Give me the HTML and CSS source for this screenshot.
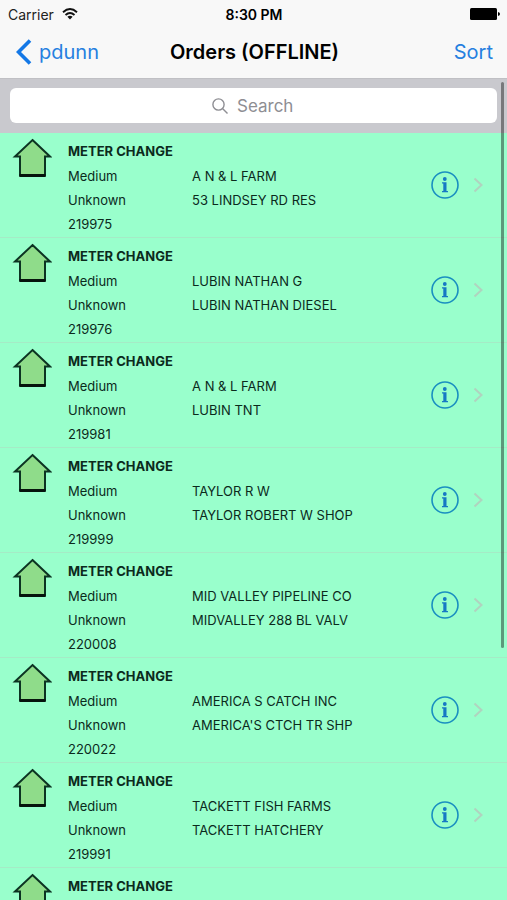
FILE: index.html
```html
<!DOCTYPE html>
<html lang="en">
<head>
<meta charset="utf-8">
<meta name="viewport" content="width=device-width, initial-scale=1">
<title>Orders (OFFLINE)</title>
<link rel="stylesheet" href="styles.css">
</head>
<body>
<svg class="sprites" aria-hidden="true">
  <symbol id="house" viewBox="0 0 40 40">
    <path d="M20.500 2 38 18.500H33V37.500H8V18.500H3Z" fill="#8fdc8a" stroke="#0c3322" stroke-width="2"/>
    <path d="M7.500 37.500H33.500" stroke="#06130c" stroke-width="3"/>
  </symbol>
  <symbol id="info" viewBox="0 0 28 28">
    <circle cx="14" cy="14" r="13" fill="none" stroke="#1a8fc0" stroke-width="1.600"/>
    <circle cx="13.800" cy="8" r="1.900" fill="#1678c4"/>
    <path d="M11 11.300H15.500V20H17V21.300H11V20H12.300V12.600H11Z" fill="#1678c4"/>
  </symbol>
  <symbol id="chevron" viewBox="0 0 10 16">
    <path d="M1.500 1.500 8.500 8 1.500 14.500" fill="none" stroke="#b0d3bf" stroke-width="2"/>
  </symbol>
</svg>
<div class="app">
  <header class="top">
    <div class="status">
      <span class="carrier">Carrier
        <svg class="wifi" viewBox="0 0 16 12" aria-hidden="true">
          <g fill="none" stroke="#111" stroke-width="1.900">
            <path d="M1 4.200Q8-2 15 4.200"/>
            <path d="M3.500 7Q8 3 12.500 7"/>
          </g>
          <path d="M5.400 8.700Q8 6.600 10.600 8.700L8 11.500Z" fill="#111"/>
        </svg>
      </span>
      <span class="clock">8:30 PM</span>
      <svg class="battery" viewBox="0 0 30 12" aria-hidden="true">
        <rect width="27" height="12" rx="1.500"/>
        <path d="M28 4Q30 4.500 30 6T28 8Z"/>
      </svg>
    </div>
    <nav class="nav">
      <a class="back" href="#">
        <svg class="back-icon" viewBox="0 0 16 26" aria-hidden="true"><path d="M14 1.500 2.500 13 14 24.500" fill="none" stroke="#1478e6" stroke-width="3.600"/></svg>
        pdunn
      </a>
      <h1 class="title">Orders (OFFLINE)</h1>
      <button class="sort" type="button">Sort</button>
    </nav>
  </header>
  <main class="content">
    <div class="search">
      <label class="search-box">
        <svg class="search-icon" viewBox="0 0 16 16" aria-hidden="true"><g fill="none" stroke="#8e8e93" stroke-width="1.400"><circle cx="6.500" cy="6.500" r="5.600"/><path d="M10.500 10.500 15.500 15.500"/></g></svg>
        <input class="search-input" type="text" placeholder="Search" aria-label="Search">
      </label>
    </div>
    <ul class="orders" id="orders"></ul>
    <div class="scrollbar"></div>
  </main>
</div>
<script src="orders.js"></script>
</body>
</html>
```
FILE: styles.css
```css
* {
  box-sizing: border-box;
}

body {
  margin: 0;
  font-family: Inter, "Liberation Sans", sans-serif;
  color: #000;
}

.sprites {
  display: none;
}

svg {
  display: block;
  flex: none;
}

.app {
  display: flex;
  flex-direction: column;
  height: 100vh;
  overflow: hidden;
}

.top {
  flex: none;
  background: #f8f8f8;
  border-bottom: 1px solid #c0c0c4;
}

.status {
  display: grid;
  grid-template-columns: 1fr auto 1fr;
  align-items: center;
  height: 26px;
  padding: 2px 7px 0 8px;
  font-size: 14px;
}

.carrier {
  display: flex;
  align-items: center;
  gap: 8px;
  color: #222;
}

.wifi {
  width: 16px;
  height: 12px;
}

.clock {
  font-weight: 600;
}

.battery {
  width: 30px;
  height: 12px;
  justify-self: end;
}

.nav {
  display: grid;
  grid-template-columns: 1fr auto 1fr;
  align-items: center;
  height: 52px;
  padding: 0 14px 0 16px;
}

.back {
  display: flex;
  align-items: center;
  gap: 7px;
  color: #2680e0;
  font-size: 20px;
  text-decoration: none;
}

.back-icon {
  width: 16px;
  height: 26px;
}

.title {
  margin: 0;
  font-size: 20px;
  font-weight: 600;
}

.sort {
  justify-self: end;
  padding: 0;
  border: 0;
  background: none;
  color: #2680e0;
  font: inherit;
  font-size: 20px;
}

.content {
  position: relative;
  flex: 1;
  min-height: 0;
  overflow: hidden;
  background: #99ffcc;
}

.search {
  padding: 9px 10px 10px;
  background: #c9c9ce;
}

.search-box {
  display: flex;
  align-items: center;
  justify-content: center;
  gap: 9px;
  height: 35px;
  border-radius: 6px;
  background: #fff;
}

.search-icon {
  width: 16px;
  height: 16px;
}

.search-input {
  width: 58px;
  padding: 0;
  border: 0;
  outline: 0;
  background: none;
  font: inherit;
  font-size: 17px;
}

.search-input::placeholder {
  color: #8e8e93;
}

.orders {
  margin: 0;
  padding: 0;
  list-style: none;
}

.order {
  display: flex;
  align-items: center;
  height: 105px;
  padding: 0 24px 0 12px;
  border-bottom: 1px solid #a5ebc6;
}

.house {
  align-self: flex-start;
  width: 40px;
  height: 40px;
  margin: 5px 16px 0 0;
}

.details {
  display: grid;
  flex: 1;
  grid-template-columns: 124px 1fr;
  align-self: flex-start;
  padding-top: 5px;
  color: #0b2a1c;
  font-size: 13px;
  line-height: 24px;
}

.kind {
  grid-column: 1 / -1;
  margin: 0;
  font-size: 13px;
  font-weight: 700;
  line-height: 26px;
}

.info {
  padding: 0;
  border: 0;
  background: none;
}

.info-icon {
  width: 28px;
  height: 28px;
}

.chevron {
  width: 10px;
  height: 16px;
  margin-left: 14px;
}

.scrollbar {
  position: absolute;
  top: 3px;
  right: 3px;
  width: 3px;
  height: 69%;
  border-radius: 2px;
  background: rgba(0, 0, 0, 0.4);
}
```
FILE: orders.js
```js
const orders = [
  ["219975", "A N & L FARM", "53 LINDSEY RD RES"],
  ["219976", "LUBIN NATHAN G", "LUBIN NATHAN DIESEL"],
  ["219981", "A N & L FARM", "LUBIN TNT"],
  ["219999", "TAYLOR R W", "TAYLOR ROBERT W SHOP"],
  ["220008", "MID VALLEY PIPELINE CO", "MIDVALLEY 288 BL VALV"],
  ["220022", "AMERICA S CATCH INC", "AMERICA'S CTCH TR SHP"],
  ["219991", "TACKETT FISH FARMS", "TACKETT HATCHERY"],
  ["", "", ""]
];

document.getElementById("orders").innerHTML = orders.map(([id, customer, site]) => `
  <li class="order">
    <svg class="house" aria-hidden="true"><use href="#house"/></svg>
    <div class="details">
      <h2 class="kind">METER CHANGE</h2>
      ${id && `<span>Medium</span><span>${customer.replace("&", "&amp;")}</span>
      <span>Unknown</span><span>${site}</span>
      <span>${id}</span>`}
    </div>
    <button class="info" type="button" aria-label="Order details"><svg class="info-icon"><use href="#info"/></svg></button>
    <svg class="chevron" aria-hidden="true"><use href="#chevron"/></svg>
  </li>`).join("");
```
